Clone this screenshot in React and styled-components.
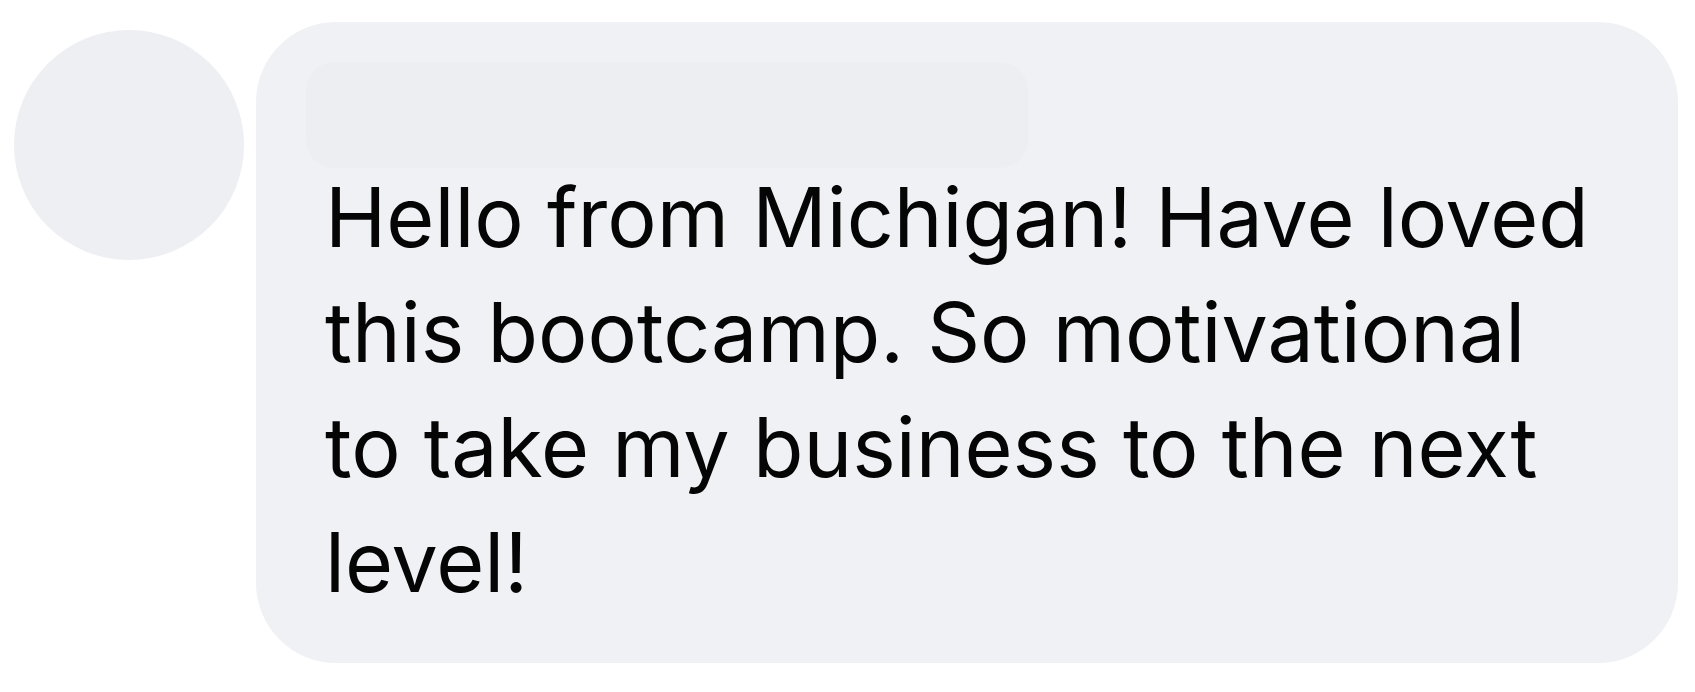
import React from "react";
import styled, { createGlobalStyle } from "styled-components";

const Global = createGlobalStyle`
  html, body {
    margin: 0;
    padding: 0;
    background: #ffffff;
  }
  body {
    font-family: Inter, "Noto Sans", "Liberation Sans", sans-serif;
  }
`;

const Row = styled.div`
  display: flex;
  align-items: flex-start;
  padding: 22px 0 0 14px;
  gap: 12px;
`;

const Avatar = styled.div`
  flex: none;
  width: 230px;
  height: 230px;
  margin-top: 8px;
  border-radius: 50%;
  background: #eeeff3;
`;

const Bubble = styled.div`
  box-sizing: border-box;
  width: 1422px;
  height: 641px;
  padding: 40px 0 0 50px;
  border-radius: 80px;
  background: #f0f1f5;
`;

const NamePlaceholder = styled.div`
  width: 722px;
  height: 106px;
  border-radius: 28px;
  background: #edeef2;
`;

const Message = styled.p`
  margin: -8px 0 0 19px;
  font-family: Inter, "Noto Sans", "Liberation Sans", sans-serif;
  font-size: 82.5px;
  line-height: 115px;
  letter-spacing: 0px;
  color: #050505;
  font-weight: 400;
`;

export default function App() {
  return (
    <>
      <Global />
      <Row>
        <Avatar />
        <Bubble>
          <NamePlaceholder />
          <Message>
            Hello from Michigan! Have loved
            <br />
            this bootcamp. So motivational
            <br />
            to take my business to the next
            <br />
            level!
          </Message>
        </Bubble>
      </Row>
    </>
  );
}
